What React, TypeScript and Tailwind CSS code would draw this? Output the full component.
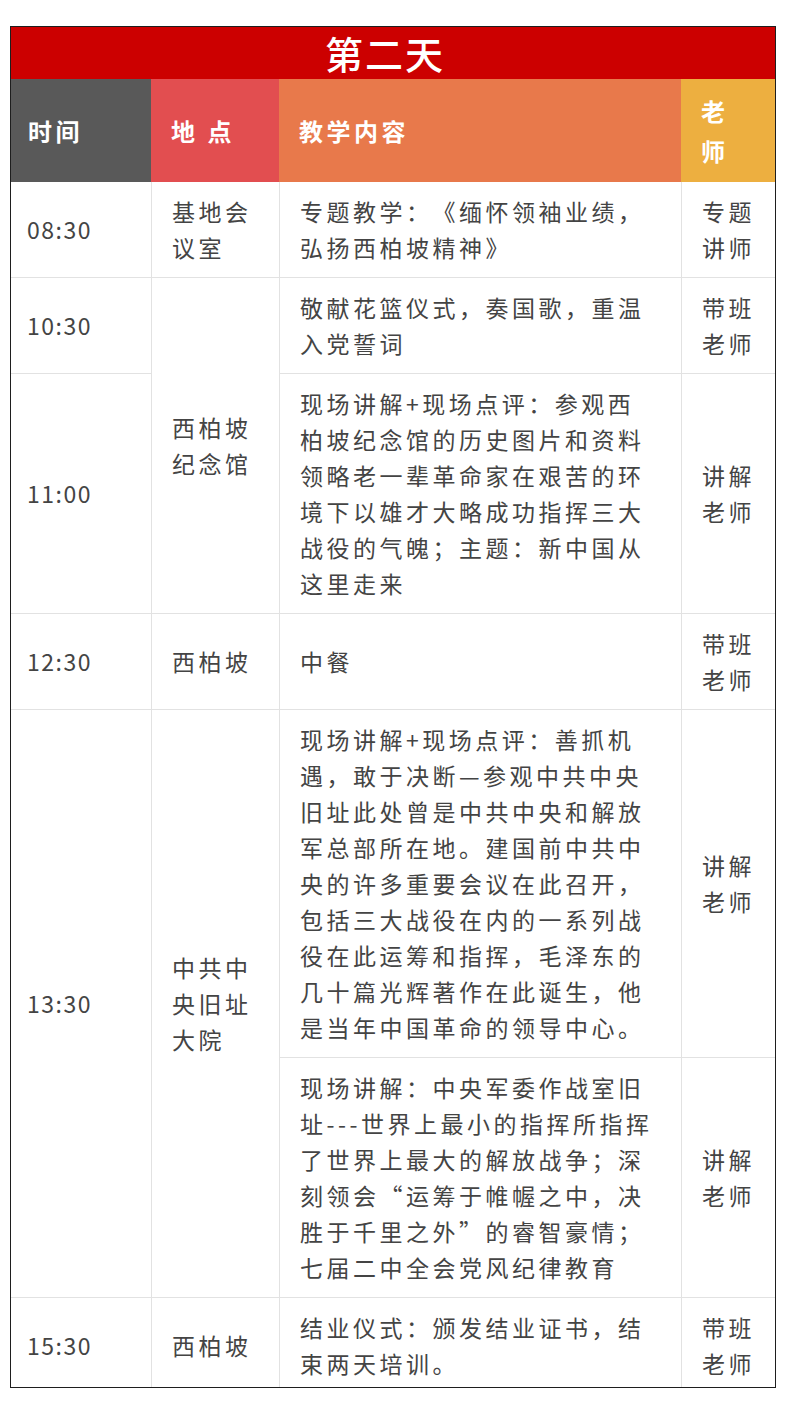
import React from "react";

const font = { fontFamily: '"Noto Sans CJK SC", "Noto Sans", sans-serif' };

type Row = {
  time?: string;
  timeSpan?: number;
  place?: string;
  placeSpan?: number;
  content: React.ReactNode;
  teacher: string;
};

const rows: Row[] = [
  { time: "08:30", place: "基地会议室", content: "专题教学：《缅怀领袖业绩，弘扬西柏坡精神》", teacher: "专题讲师" },
  { time: "10:30", place: "西柏坡纪念馆", placeSpan: 2, content: "敬献花篮仪式，奏国歌，重温入党誓词", teacher: "带班老师" },
  { time: "11:00", content: "现场讲解+现场点评：参观西柏坡纪念馆的历史图片和资料领略老一辈革命家在艰苦的环境下以雄才大略成功指挥三大战役的气魄；主题：新中国从这里走来", teacher: "讲解老师" },
  { time: "12:30", place: "西柏坡", content: "中餐", teacher: "带班老师" },
  { time: "13:30", timeSpan: 2, place: "中共中央旧址大院", placeSpan: 2, content: "现场讲解+现场点评：善抓机遇，敢于决断—参观中共中央旧址此处曾是中共中央和解放军总部所在地。建国前中共中央的许多重要会议在此召开，包括三大战役在内的一系列战役在此运筹和指挥，毛泽东的几十篇光辉著作在此诞生，他是当年中国革命的领导中心。", teacher: "讲解老师" },
  {
    content: (
      <>
        现场讲解：中央军委作战室旧址---世界上最小的指挥所指挥了世界上最大的解放战争；深刻领会“运筹于帷幄之中，决胜于千里之外”的睿智豪情；
        <br />
        七届二中全会党风纪律教育
      </>
    ),
    teacher: "讲解老师",
  },
  { time: "15:30", place: "西柏坡", content: "结业仪式：颁发结业证书，结束两天培训。", teacher: "带班老师" },
];

export default function App() {
  return (
    <div className="bg-white w-[790px] min-h-[1414px] pt-[26px] pl-[10px]" style={font}>
      <div className="w-[766px] border border-[#1e1e1e] overflow-hidden h-[1362px]">
        <table className="w-[764px] table-fixed border-separate border-spacing-0">
          <colgroup>
            <col className="w-[140px]" />
            <col className="w-[128px]" />
            <col className="w-[402px]" />
            <col className="w-[94px]" />
          </colgroup>
          <thead>
            <tr>
              <th colSpan={4} className="bg-[#cc0000] h-[52px] p-0 pr-[16px] text-center align-middle text-white text-[38px] leading-[52px] font-medium tracking-[2px]">
                第二天
              </th>
            </tr>
            <tr className="text-white text-[24px] leading-[40px] font-medium tracking-[3.5px]">
              <th className="bg-[#595959] h-[103px] text-left align-middle pl-[17px]">时间</th>
              <th className="bg-[#e24e50] h-[103px] text-left align-middle pl-[20px]">地 点</th>
              <th className="bg-[#e8794b] h-[103px] text-left align-middle pl-[20px]">教学内容</th>
              <th className="bg-[#edaf40] h-[103px] text-left align-middle pl-[20px] pr-[10px]">
                老<br />师
              </th>
            </tr>
          </thead>
          <tbody className="text-[#444444] text-[23px] leading-[36px] tracking-[3.5px] [text-spacing-trim:space-all]">
            {rows.map((r, i) => {
              const bt = i === 0 ? "" : "border-t";
              const pad = "pt-[11px] pb-[12px]";
              return (
                <tr key={i}>
                  {r.time && (
                    <td rowSpan={r.timeSpan ?? 1} className={`${bt} border-[#e2e2e2] pl-4 pr-2 ${pad} align-middle tracking-[1.5px]`}>
                      {r.time}
                    </td>
                  )}
                  {r.place && (
                    <td rowSpan={r.placeSpan ?? 1} className={`${bt} border-l border-[#e2e2e2] pl-[20px] pr-[20px] ${pad} align-middle`}>
                      {r.place}
                    </td>
                  )}
                  <td className={`${bt} border-l border-[#e2e2e2] pl-[20px] pr-[24px] ${pad} align-middle`}>
                    {r.content}
                  </td>
                  <td className={`${bt} border-l border-[#e2e2e2] pl-[20px] pr-[16px] ${pad} align-middle`}>
                    {r.teacher}
                  </td>
                </tr>
              );
            })}
          </tbody>
        </table>
      </div>
    </div>
  );
}
